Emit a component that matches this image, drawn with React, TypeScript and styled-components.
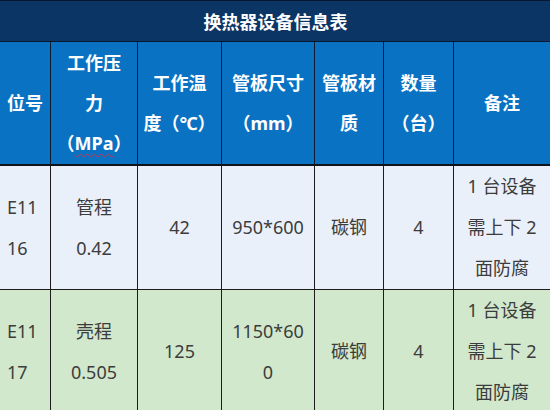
import React from 'react';
import styled, { createGlobalStyle } from 'styled-components';

const GlobalStyle = createGlobalStyle`
  html, body {
    margin: 0;
    padding: 0;
    background: #ffffff;
    overflow: hidden;
  }
  body {
    font-family: "Noto Sans", "Noto Sans CJK SC", sans-serif;
  }
`;

type Tone = 'blue' | 'green';

type Row = {
  tone: Tone;
  cells: string[][];
};

const colWidths = [51, 87, 84, 93, 69, 70, 97];

const rows: Row[] = [
  {
    tone: 'blue',
    cells: [['E11', '16'], ['管程', '0.42'], ['42'], ['950*600'], ['碳钢'], ['4'], ['1 台设备', '需上下 2', '面防腐']],
  },
  {
    tone: 'green',
    cells: [['E11', '17'], ['壳程', '0.505'], ['125'], ['1150*60', '0'], ['碳钢'], ['4'], ['1 台设备', '需上下 2', '面防腐']],
  },
];

const toneColors: Record<Tone, string> = {
  blue: '#eaf0f9',
  green: '#d1e8cd',
};

function Lines({ lines }: { lines: React.ReactNode[] }) {
  return (
    <>
      {lines.map((line, i) => (
        <Line key={i}>{line}</Line>
      ))}
    </>
  );
}

export default function App() {
  const headers: React.ReactNode[][] = [
    ['位号'],
    ['工作压', '力', <>（<Typo>MPa</Typo>）</>],
    ['工作温', '度（℃）'],
    ['管板尺寸', '（mm）'],
    ['管板材', '质'],
    ['数量', '（台）'],
    ['备注'],
  ];

  return (
    <>
      <GlobalStyle />
      <Sheet>
        <colgroup>
          {colWidths.map((w, i) => (
            <col key={i} style={{ width: w }} />
          ))}
        </colgroup>
        <thead>
          <tr>
            <TitleCell colSpan={7}>换热器设备信息表</TitleCell>
          </tr>
          <tr>
            {headers.map((h, i) => (
              <HeadCell key={i}>
                <Lines lines={h} />
              </HeadCell>
            ))}
          </tr>
        </thead>
        <tbody>
          {rows.map((row, r) => (
            <tr key={r}>
              {row.cells.map((c, i) => (
                <BodyCell key={i} $tone={row.tone} $left={i === 0} $divider={r < rows.length - 1}>
                  <Lines lines={c} />
                </BodyCell>
              ))}
            </tr>
          ))}
        </tbody>
      </Sheet>
    </>
  );
}

const Sheet = styled.table`
  width: 551px;
  table-layout: fixed;
  border-collapse: separate;
  border-spacing: 0;
`;

const TitleCell = styled.th`
  height: 40px;
  padding: 0;
  background-color: #0b3565;
  border-top: 1px solid #08172e;
  border-bottom: 1px solid #08172e;
  color: #ffffff;
  font-size: 18px;
  font-weight: 700;
  text-align: center;
  vertical-align: middle;
`;

const HeadCell = styled.th`
  padding: 1px 4px;
  background-color: #0a72c2;
  border-right: 1px solid #0c1a2e;
  border-bottom: 2px solid #101418;
  color: #ffffff;
  font-size: 18px;
  font-weight: 700;
  line-height: 40px;
  text-align: center;
  vertical-align: middle;
`;

const BodyCell = styled.td<{ $tone: Tone; $left: boolean; $divider: boolean }>`
  padding: ${({ $left }) => ($left ? '0 4px 0 7px' : '0 4px')};
  background-color: ${({ $tone }) => toneColors[$tone]};
  border-right: 1px solid #1c1c1c;
  border-bottom: ${({ $divider }) => ($divider ? '1px solid #1c1c1c' : 'none')};
  color: #3c3c3c;
  font-size: 18px;
  line-height: 41px;
  text-align: ${({ $left }) => ($left ? 'left' : 'center')};
  vertical-align: middle;
`;

const Line = styled.div`
  white-space: nowrap;
`;

const Typo = styled.span`
  text-decoration: underline wavy #d0314a;
  text-decoration-thickness: 1px;
  text-underline-offset: 3px;
`;
